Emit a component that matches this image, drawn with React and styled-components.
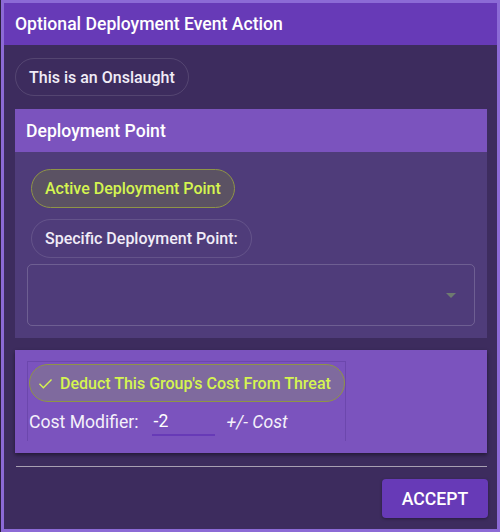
import React from 'react';
import styled, { createGlobalStyle } from 'styled-components';

const GlobalStyle = createGlobalStyle`
  html, body {
    margin: 0;
    padding: 0;
    background: #2a1f3d;
  }
  body {
    font-family: Roboto, "Noto Sans", "Liberation Sans", sans-serif;
  }
  * {
    box-sizing: border-box;
  }
`;

const Dialog = styled.div`
  width: 499px;
  height: 532px;
  margin-left: 1px;
  border: 3px solid #8c6ad6;
  background: #3d2c5e;
  display: flex;
  flex-direction: column;
`;

Dialog.Header = styled.div`
  height: 42px;
  background: #673ab7;
  color: #fff;
  font-size: 17.6px;
  font-weight: 500;
  display: flex;
  align-items: center;
  padding-left: 11px;
`;

Dialog.Body = styled.div`
  flex: 1;
  display: flex;
  flex-direction: column;
  padding: 13px 10px 0 11px;
`;

Dialog.Divider = styled.hr`
  border: none;
  height: 1px;
  background: #a8a0b2;
  margin: 13px 0 0 1px;
`;

Dialog.Actions = styled.div`
  display: flex;
  justify-content: flex-end;
  padding-top: 12px;
`;

const Chip = styled.div`
  align-self: flex-start;
  height: ${(p) => p.$h || 38}px;
  display: flex;
  align-items: center;
  gap: 6px;
  white-space: nowrap;
  padding: 0 13px 0 ${(p) => p.$pl || 13}px;
  border-radius: 20px;
  font-size: 16px;
  font-weight: 500;
  color: ${(p) => (p.$active ? '#d5f550' : '#f1ecf7')};
  background: ${(p) => (p.$active ? p.$bg : 'transparent')};
  border: 1px solid ${(p) => (p.$active ? '#8f9446' : 'rgba(255,255,255,0.12)')};
  margin-left: ${(p) => p.$ml || 0}px;
`;

const Panel = styled.section`
  background: #4f3c7a;
  margin-top: 13px;
`;

Panel.Title = styled.div`
  height: 43px;
  background: #7b53be;
  color: #fff;
  font-size: 17.6px;
  font-weight: 500;
  display: flex;
  align-items: center;
  padding-left: 11px;
`;

Panel.Content = styled.div`
  display: flex;
  flex-direction: column;
  padding: 17px 12px 12px 12px;
  gap: 11px;
`;

const Select = styled.div`
  height: 62px;
  margin-top: -5px;
  border: 1px solid rgba(255, 255, 255, 0.18);
  border-radius: 5px;
  display: flex;
  align-items: center;
  justify-content: flex-end;
  padding-right: 18px;
`;

const Arrow = styled.span`
  width: 0;
  height: 0;
  border-left: 5px solid transparent;
  border-right: 5px solid transparent;
  border-top: 5px solid #6e7a70;
`;

const CostCard = styled.section`
  margin-top: 12px;
  background: #7b53be;
  padding: 11px 12px 12px 12px;
  display: flex;
  box-shadow: 0 2px 4px rgba(0, 0, 0, 0.45);
`;

CostCard.Group = styled.div`
  border-left: 1px solid #6c47ad;
  border-right: 1px solid #6c47ad;
  border-top: 1px solid #6c47ad;
  padding: 2px 0 0 1px;
  display: flex;
  flex-direction: column;
`;

const CostRow = styled.div`
  display: flex;
  align-items: center;
  height: 39px;
  color: #f4f0fa;
  font-size: 17.6px;
`;

const CostInput = styled.div`
  width: 63px;
  margin-left: 13px;
  padding: 3px 0 0 2px;
  height: 28px;
  border-bottom: 2px solid #673ab7;
  color: #fff;
  font-size: 17.6px;
`;

const Hint = styled.span`
  font-style: italic;
  margin-left: 12px;
`;

const Button = styled.button`
  width: 106px;
  height: 39px;
  margin-right: -1px;
  border: none;
  border-radius: 4px;
  background: #673ab7;
  color: #fff;
  font-family: inherit;
  font-size: 17.6px;
  font-weight: 500;
  box-shadow: 0 1px 3px rgba(0, 0, 0, 0.35);
`;

const Check = () => (
  <svg width="17" height="17" viewBox="0 0 24 24" fill="none">
    <path d="M3.5 12.5l5.5 5.5L20.5 6.5" stroke="#d5f550" strokeWidth="2" />
  </svg>
);

export default function App() {
  return (
    <>
      <GlobalStyle />
      <Dialog>
        <Dialog.Header>Optional Deployment Event Action</Dialog.Header>
        <Dialog.Body>
          <Chip>This is an Onslaught</Chip>

          <Panel>
            <Panel.Title>Deployment Point</Panel.Title>
            <Panel.Content>
              <Chip $active $bg="#5b5263" $ml={4} $h={39}>
                Active Deployment Point
              </Chip>
              <Chip $ml={4} $h={39}>Specific Deployment Point:</Chip>
              <Select>
                <Arrow />
              </Select>
            </Panel.Content>
          </Panel>

          <CostCard>
            <CostCard.Group>
              <Chip $active $bg="#7f6a9e" $pl={7}>
                <Check />
                Deduct This Group's Cost From Threat
              </Chip>
              <CostRow>
                Cost Modifier:
                <CostInput>-2</CostInput>
                <Hint>+/- Cost</Hint>
              </CostRow>
            </CostCard.Group>
          </CostCard>

          <Dialog.Divider />
          <Dialog.Actions>
            <Button>ACCEPT</Button>
          </Dialog.Actions>
        </Dialog.Body>
      </Dialog>
    </>
  );
}
